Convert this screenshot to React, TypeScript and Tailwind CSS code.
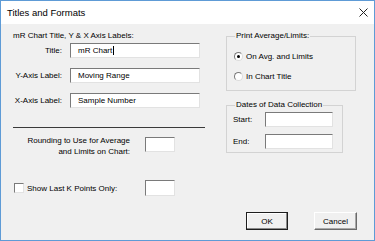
const sunken =
  "bg-white border border-t-[#7a7a7a] border-l-[#7a7a7a] border-r-[#e2e2e2] border-b-[#e2e2e2]";

const TextBox = ({ w, h = 15, value, cursor }: { w: number; h?: number; value?: string; cursor?: boolean }) => (
  <div
    className={`${sunken} flex items-center pl-[7px] shrink-0`}
    style={{ width: w, height: h }}
  >
    {value && <span className="leading-[11px] whitespace-nowrap">{value}</span>}
    {cursor && <span className="inline-block w-px h-[9px] bg-black ml-[1px]" />}
  </div>
);

const Radio = ({ checked, label }: { checked?: boolean; label: string }) => (
  <div className="flex items-center h-[13px]">
    <span className="w-[9px] h-[9px] rounded-full bg-white border border-t-[#7a7a7a] border-l-[#7a7a7a] border-r-[#dcdcdc] border-b-[#dcdcdc] flex items-center justify-center">
      {checked && <span className="w-[3px] h-[3px] rounded-full bg-black" />}
    </span>
    <span className="ml-[3px] whitespace-nowrap">{label}</span>
  </div>
);

const Group = ({ title, className, children }: { title: string; className: string; children: React.ReactNode }) => (
  <div className={`relative border border-[#d3d3d3] ${className}`}>
    <span className="absolute -top-[7px] left-[8px] px-[1px] bg-[#f0f0f0] leading-[11px] whitespace-nowrap">
      {title}
    </span>
    {children}
  </div>
);

export default function App() {
  return (
    <div className="w-[375px] h-[241px] flex flex-col border border-[#5e9bd6] bg-white text-black text-[8px] leading-[11px] font-['Liberation_Sans',Arial,sans-serif]">
      {/* title bar */}
      <div className="h-[23px] shrink-0 flex items-center justify-between pl-[6px] pr-[6px] bg-white">
        <span className="text-[9.5px] leading-[12px]">Titles and Formats</span>
        <svg width="9" height="9" viewBox="0 0 9 9">
          <path d="M0.5 0.5 L8.5 8.5 M8.5 0.5 L0.5 8.5" stroke="#222" strokeWidth="1" fill="none" />
        </svg>
      </div>

      {/* body */}
      <div className="flex-1 bg-[#f0f0f0] flex flex-col">
        <div className="flex items-start">
          {/* left column */}
          <div className="ml-[12px] pt-[6px] w-[192px] flex flex-col">
            <div className="whitespace-nowrap">mR Chart Title, Y &amp; X Axis Labels:</div>
            <div className="flex items-center mt-[2px]">
              <span className="w-[49px] text-right">Title:</span>
              <div className="ml-[8px]">
                <TextBox w={130} value="mR Chart" cursor />
              </div>
            </div>
            <div className="flex items-center mt-[10px]">
              <span className="w-[49px] text-right whitespace-nowrap">Y-Axis Label:</span>
              <div className="ml-[8px]">
                <TextBox w={130} value="Moving Range" />
              </div>
            </div>
            <div className="flex items-center mt-[10px]">
              <span className="w-[49px] text-right whitespace-nowrap">X-Axis Label:</span>
              <div className="ml-[8px]">
                <TextBox w={130} value="Sample Number" />
              </div>
            </div>

            <div className="mt-[19px] h-px w-[192px] bg-[#3a3a3a]" />

            <div className="flex items-start mt-[7px]">
              <div className="w-[117px] text-right">
                Rounding to Use for Average
                <br />
                and Limits on Chart:
              </div>
              <div className="ml-[15px] mt-[2px]">
                <TextBox w={30} />
              </div>
            </div>

            <div className="flex items-center mt-[23px] h-[16px]">
              <span className={`ml-[1px] w-[10px] h-[10px] ${sunken}`} />
              <span className="ml-[3px] w-[118px] whitespace-nowrap">Show Last K Points Only:</span>
              <TextBox w={30} h={16} />
            </div>
          </div>

          {/* right column */}
          <div className="ml-[21px] pt-[12px] flex flex-col">
            <Group title="Print Average/Limits:" className="w-[130px] h-[55px] pt-[13px] pl-[7px]">
              <Radio checked label="On Avg. and Limits" />
              <div className="mt-[7px]">
                <Radio label="In Chart Title" />
              </div>
            </Group>

            <Group title="Dates of Data Collection" className="mt-[14px] w-[117px] h-[48px] pt-[6px] pl-[6px]">
              <div className="flex items-center">
                <span className="w-[32px]">Start:</span>
                <TextBox w={68} />
              </div>
              <div className="flex items-center mt-[7px]">
                <span className="w-[32px]">End:</span>
                <TextBox w={68} />
              </div>
            </Group>
          </div>
        </div>

        {/* buttons */}
        <div className="flex justify-end gap-[26px] mt-[16px] pr-[17px]">
          <button className="w-[42px] h-[18px] bg-[#f0f0f0] border border-[#1e1e1e] shadow-[inset_-1px_-1px_0_#8a8a8a,inset_1px_1px_0_#ffffff] text-[8px] leading-[11px]">
            OK
          </button>
          <button className="w-[43px] h-[18px] bg-[#f0f0f0] border border-t-white border-l-white border-r-[#6a6a6a] border-b-[#6a6a6a] shadow-[inset_-1px_-1px_0_#a8a8a8] text-[8px] leading-[11px]">
            Cancel
          </button>
        </div>
      </div>
    </div>
  );
}
